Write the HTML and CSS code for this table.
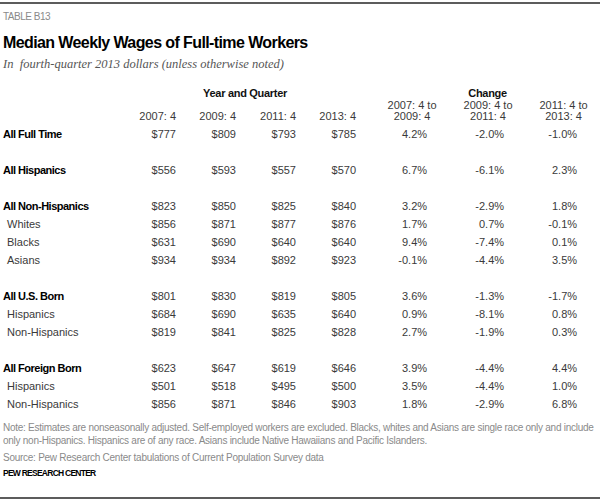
FILE: index.html
```html
<!DOCTYPE html>
<html>
<head>
<meta charset="utf-8">
<link rel="stylesheet" href="styles.css">
</head>
<body>
<div class="page">
  <p class="kicker">TABLE B13</p>
  <h1 class="title">Median Weekly Wages of Full-time Workers</h1>
  <p class="sub">In&nbsp; fourth-quarter 2013 dollars (unless otherwise noted)</p>
  <table class="wages">
    <colgroup>
      <col class="c-label"><col class="c-year"><col class="c-year"><col class="c-year"><col class="c-year"><col class="c-gap"><col class="c-ch1"><col class="c-ch2"><col class="c-ch3">
    </colgroup>
    <thead>
      <tr class="group">
        <th></th>
        <th colspan="4" class="grp-year">Year and Quarter</th>
        <th></th>
        <th colspan="3" class="grp-change">Change</th>
      </tr>
      <tr class="cols">
        <th></th>
        <th class="yr">2007: 4</th>
        <th class="yr">2009: 4</th>
        <th class="yr">2011: 4</th>
        <th class="yr">2013: 4</th>
        <th></th>
        <th class="ch">2007: 4 to<br>2009: 4</th>
        <th class="ch">2009: 4 to<br>2011: 4</th>
        <th class="ch">2011: 4 to<br>2013: 4</th>
      </tr>
    </thead>
    <tbody>
      <tr class="main"><th>All Full Time</th><td>$777</td><td>$809</td><td>$793</td><td>$785</td><td></td><td class="pc">4.2%</td><td class="pc">-2.0%</td><td class="pc">-1.0%</td></tr>
      <tr class="blank"><td colspan="9"></td></tr>
      <tr class="main"><th>All Hispanics</th><td>$556</td><td>$593</td><td>$557</td><td>$570</td><td></td><td class="pc">6.7%</td><td class="pc">-6.1%</td><td class="pc">2.3%</td></tr>
      <tr class="blank"><td colspan="9"></td></tr>
      <tr class="main"><th>All Non-Hispanics</th><td>$823</td><td>$850</td><td>$825</td><td>$840</td><td></td><td class="pc">3.2%</td><td class="pc">-2.9%</td><td class="pc">1.8%</td></tr>
      <tr class="sub-row"><th>Whites</th><td>$856</td><td>$871</td><td>$877</td><td>$876</td><td></td><td class="pc">1.7%</td><td class="pc">0.7%</td><td class="pc">-0.1%</td></tr>
      <tr class="sub-row"><th>Blacks</th><td>$631</td><td>$690</td><td>$640</td><td>$640</td><td></td><td class="pc">9.4%</td><td class="pc">-7.4%</td><td class="pc">0.1%</td></tr>
      <tr class="sub-row"><th>Asians</th><td>$934</td><td>$934</td><td>$892</td><td>$923</td><td></td><td class="pc">-0.1%</td><td class="pc">-4.4%</td><td class="pc">3.5%</td></tr>
      <tr class="blank"><td colspan="9"></td></tr>
      <tr class="main"><th>All U.S. Born</th><td>$801</td><td>$830</td><td>$819</td><td>$805</td><td></td><td class="pc">3.6%</td><td class="pc">-1.3%</td><td class="pc">-1.7%</td></tr>
      <tr class="sub-row"><th>Hispanics</th><td>$684</td><td>$690</td><td>$635</td><td>$640</td><td></td><td class="pc">0.9%</td><td class="pc">-8.1%</td><td class="pc">0.8%</td></tr>
      <tr class="sub-row"><th>Non-Hispanics</th><td>$819</td><td>$841</td><td>$825</td><td>$828</td><td></td><td class="pc">2.7%</td><td class="pc">-1.9%</td><td class="pc">0.3%</td></tr>
      <tr class="blank"><td colspan="9"></td></tr>
      <tr class="main"><th>All Foreign Born</th><td>$623</td><td>$647</td><td>$619</td><td>$646</td><td></td><td class="pc">3.9%</td><td class="pc">-4.4%</td><td class="pc">4.4%</td></tr>
      <tr class="sub-row"><th>Hispanics</th><td>$501</td><td>$518</td><td>$495</td><td>$500</td><td></td><td class="pc">3.5%</td><td class="pc">-4.4%</td><td class="pc">1.0%</td></tr>
      <tr class="sub-row"><th>Non-Hispanics</th><td>$856</td><td>$871</td><td>$846</td><td>$903</td><td></td><td class="pc">1.8%</td><td class="pc">-2.9%</td><td class="pc">6.8%</td></tr>
    </tbody>
  </table>
  <p class="note">Note: Estimates are nonseasonally adjusted. Self-employed workers are excluded. Blacks, whites and Asians are single race only and include<br>only non-Hispanics. Hispanics are of any race. Asians include Native Hawaiians and Pacific Islanders.</p>
  <p class="source">Source: Pew Research Center tabulations of Current Population Survey data</p>
  <p class="credit">PEW RESEARCH CENTER</p>
</div>
</body>
</html>
```
FILE: styles.css
```css
html, body {
  margin: 0;
  padding: 0;
  background: #ffffff;
}

body {
  font-family: "Liberation Sans", Arial, sans-serif;
  color: #222;
}

.page {
  width: 600px;
  box-sizing: border-box;
  margin-top: 2px;
  padding: 0 0 17px 3px;
  border-top: 2px solid #5c5c5c;
  border-bottom: 2px solid #5c5c5c;
}

.kicker {
  margin: 7px 0 0;
  font-size: 10px;
  line-height: 12px;
  color: #8a8a8a;
  letter-spacing: -0.5px;
}

.title {
  margin: 10px 0 0;
  font-size: 16px;
  line-height: 20px;
  font-weight: bold;
  color: #000;
  letter-spacing: -0.6px;
}

.sub {
  margin: 4px 0 0;
  font-family: "Liberation Serif", "Times New Roman", serif;
  font-style: italic;
  font-size: 12.5px;
  line-height: 14px;
  color: #555;
}

.wages {
  margin-top: 16px;
  width: 597px;
  table-layout: fixed;
  border-collapse: collapse;
  font-size: 11px;
  color: #3a3a3a;
}

.c-label { width: 113px; }
.c-year { width: 60px; }
.c-gap { width: 19px; }
.c-ch1 { width: 74px; }
.c-ch2 { width: 78px; }
.c-ch3 { width: 73px; }

.wages th, .wages td {
  padding: 0;
}

.group th {
  height: 13px;
  line-height: 13px;
  font-weight: bold;
  color: #111;
  letter-spacing: -0.3px;
  vertical-align: middle;
}

.grp-year {
  text-align: center;
  padding-left: 18px !important;
}

.grp-change {
  text-align: center;
}

.cols th {
  font-weight: normal;
  line-height: 11px;
  height: 22px;
  padding-bottom: 3px;
  vertical-align: bottom;
  color: #3a3a3a;
}

.cols .yr {
  text-align: right;
}

.cols .ch {
  text-align: center;
}

.wages tbody tr {
  height: 18px;
}

.wages tbody td {
  text-align: right;
  line-height: 18px;
  vertical-align: middle;
}

.wages tbody td.pc {
  padding-right: 22px;
}

.wages tbody td.pc + td.pc {
  padding-right: 23px;
}

.wages tbody th {
  text-align: left;
  vertical-align: middle;
  line-height: 18px;
  white-space: nowrap;
}

.main th {
  font-weight: bold;
  color: #000;
  letter-spacing: -0.5px;
}

.sub-row th {
  font-weight: normal;
  padding-left: 4px;
  color: #3a3a3a;
}

.blank td {
  height: 18px;
}

.note, .source {
  font-size: 10px;
  line-height: 13px;
  color: #8a8a8a;
  letter-spacing: -0.26px;
  white-space: nowrap;
}

.note {
  margin: 8px 0 0;
}

.source {
  margin: 4px 0 0;
}

.credit {
  margin: 3px 0 0;
  font-size: 8.5px;
  line-height: 13px;
  font-weight: bold;
  color: #000;
  letter-spacing: -0.75px;
}
```
